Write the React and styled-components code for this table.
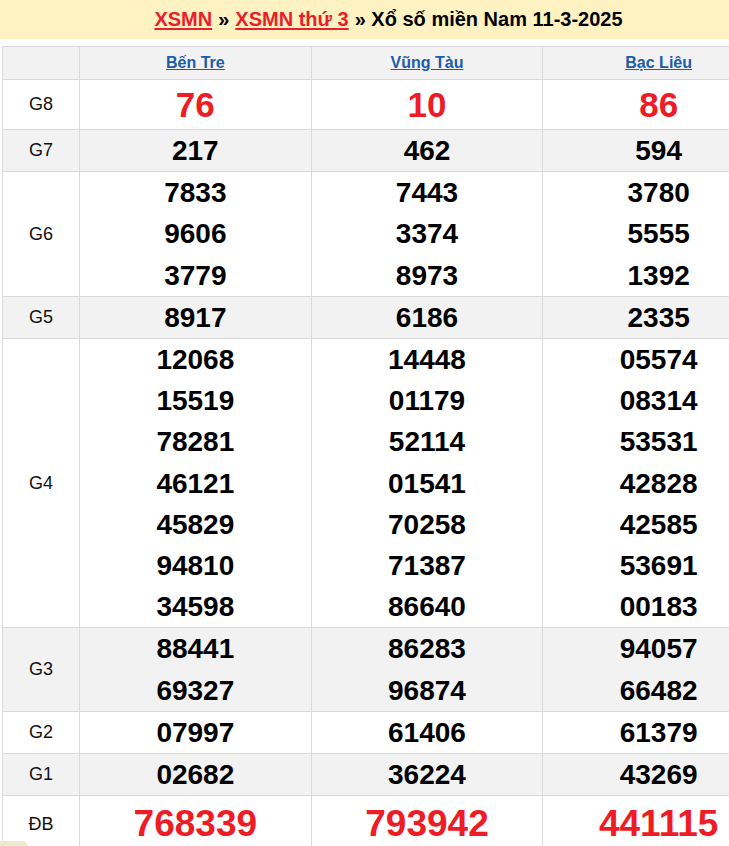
import React from "react";
import styled, { createGlobalStyle } from "styled-components";

const GlobalStyle = createGlobalStyle`
  html, body {
    margin: 0;
    padding: 0;
    overflow: hidden;
    background: #fff;
    font-family: "Liberation Sans", Arial, sans-serif;
  }
`;

const Page = styled.div`
  width: 777px;
`;

const TitleBar = styled.h2`
  margin: 0;
  height: 39px;
  background: #fff2c2;
  display: flex;
  align-items: center;
  justify-content: center;
  gap: 6px;
  font-size: 20px;
  font-weight: bold;
  color: #000;
`;

const TitleLink = styled.a`
  color: #e8202a;
  text-decoration: underline;
  text-underline-offset: 2px;
`;

const Table = styled.table`
  margin: 7px 2px 0;
  width: 773px;
  border-collapse: collapse;
  table-layout: fixed;
`;

const Row = styled.tr`
  background: ${(p) => (p.$shade ? "#f2f2f2" : "#fff")};
`;

const HeadCell = styled.th`
  height: 32px;
  padding: 0;
  border: 1px solid #dadada;
  background: #f2f2f2;
  font-size: 16px;
  font-weight: bold;
  width: ${(p) => p.$w || "auto"};
`;

const Province = styled.a`
  color: #1b5cad;
  text-decoration: underline;
`;

const Label = styled.td`
  padding: 0;
  border: 1px solid #dadada;
  text-align: center;
  font-size: 18px;
  color: #111;
`;

const Cell = styled.td`
  padding: 0;
  border: 1px solid #dadada;
  text-align: center;
`;

const Num = styled.div`
  font-weight: bold;
  font-size: ${(p) => p.$size}px;
  line-height: ${(p) => p.$lh}px;
  color: ${(p) => (p.$red ? "#ee1c25" : "#000")};
`;

const Corner = styled.div`
  position: fixed;
  left: 0;
  top: 841px;
  width: 28px;
  height: 10px;
  background: #ecebc9;
  border-radius: 0 6px 0 0;
`;

const provinces = ["Bến Tre", "Vũng Tàu", "Bạc Liêu"];

const rows = [
  { label: "G8", size: 35, lh: 49, red: true, values: [["76"], ["10"], ["86"]] },
  { label: "G7", values: [["217"], ["462"], ["594"]] },
  {
    label: "G6",
    values: [
      ["7833", "9606", "3779"],
      ["7443", "3374", "8973"],
      ["3780", "5555", "1392"],
    ],
  },
  { label: "G5", values: [["8917"], ["6186"], ["2335"]] },
  {
    label: "G4",
    values: [
      ["12068", "15519", "78281", "46121", "45829", "94810", "34598"],
      ["14448", "01179", "52114", "01541", "70258", "71387", "86640"],
      ["05574", "08314", "53531", "42828", "42585", "53691", "00183"],
    ],
  },
  {
    label: "G3",
    values: [
      ["88441", "69327"],
      ["86283", "96874"],
      ["94057", "66482"],
    ],
  },
  { label: "G2", values: [["07997"], ["61406"], ["61379"]] },
  { label: "G1", values: [["02682"], ["36224"], ["43269"]] },
  { label: "ĐB", size: 37, lh: 56, red: true, values: [["768339"], ["793942"], ["441115"]] },
];

export default function App() {
  return (
    <Page>
      <GlobalStyle />
      <TitleBar>
        <TitleLink href="#">XSMN</TitleLink>
        <span>»</span>
        <TitleLink href="#">XSMN thứ 3</TitleLink>
        <span>» Xổ số miền Nam 11-3-2025</span>
      </TitleBar>
      <Table>
        <thead>
          <tr>
            <HeadCell $w="76px" />
            {provinces.map((p) => (
              <HeadCell key={p}>
                <Province href="#">{p}</Province>
              </HeadCell>
            ))}
          </tr>
        </thead>
        <tbody>
          {rows.map((r, i) => (
            <Row key={r.label} $shade={i % 2 === 1}>
              <Label>{r.label}</Label>
              {r.values.map((col, j) => (
                <Cell key={j}>
                  {col.map((n, k) => (
                    <Num key={k} $size={r.size || 28} $lh={r.lh || 41.2} $red={r.red}>
                      {n}
                    </Num>
                  ))}
                </Cell>
              ))}
            </Row>
          ))}
        </tbody>
      </Table>
      <Corner />
    </Page>
  );
}
